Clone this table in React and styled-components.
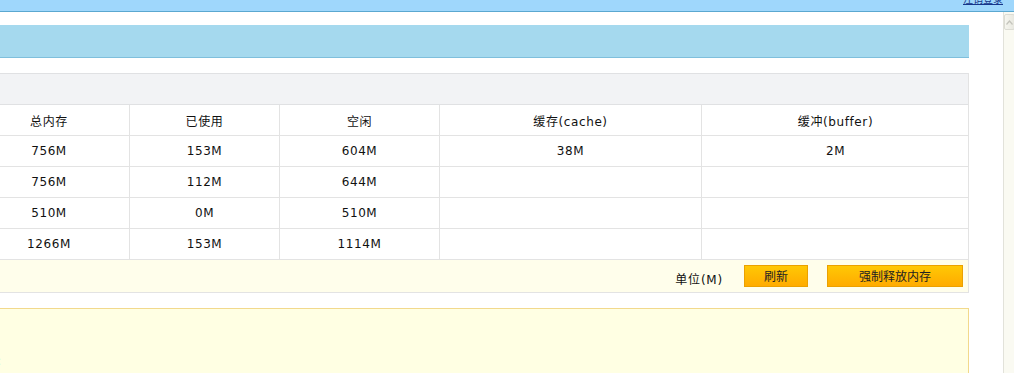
import React from 'react'
import styled, { createGlobalStyle } from 'styled-components'

const GlobalStyle = createGlobalStyle`
  html, body {
    margin: 0;
    padding: 0;
    background: #ffffff;
    overflow: hidden;
  }
  body {
    font-family: "DejaVu Sans", "Noto Sans CJK SC", sans-serif;
    font-size: 12px;
    color: #111;
  }
`

const Page = styled.div`
  width: 1014px;
  height: 373px;
  display: flex;
  flex-direction: column;
  overflow: hidden;
`

const TopBar = styled.div`
  height: 11px;
  flex-shrink: 0;
  background: #9fd7fc;
  border-bottom: 1px solid #5ba8d0;
  display: flex;
  justify-content: flex-end;
  align-items: flex-end;
  padding-right: 11px;
  overflow: hidden;
`

const TopLink = styled.a`
  font-size: 10px;
  line-height: 16px;
  margin-bottom: 3px;
  color: #16358a;
  text-decoration: underline;
`

const Body = styled.div`
  flex: 1;
  display: flex;
  min-height: 0;
`

const Main = styled.div`
  flex: 1;
  overflow: hidden;
  padding-top: 13px;
`

// the frame is scrolled a little to the right, so the content starts left of the viewport
const Content = styled.div`
  width: 1000px;
  margin-left: -31px;
  display: flex;
  flex-direction: column;
`

const TitleBand = styled.div`
  height: 32px;
  background: #a5d9ee;
  border-bottom: 1px solid #7fbfdc;
`

const Panel = styled.div`
  margin-top: 15px;
  border-right: 1px solid #e3e3e3;
`

const PanelHead = styled.div`
  height: 30px;
  background: #f2f3f5;
  border-top: 1px solid #e0e1e3;
  border-bottom: 1px solid #e0e1e3;
`

const Grid = styled.div`
  display: grid;
  grid-template-columns: 160px 150px 160px 262px 268px;
`

const Cell = styled.div`
  height: 30px;
  display: flex;
  align-items: center;
  justify-content: center;
  border-bottom: 1px solid #e3e3e3;
  border-left: ${p => (p.$first ? 'none' : '1px solid #e3e3e3')};
  letter-spacing: 0.6px;
  color: #111;
`

const Footer = styled.div`
  height: 32px;
  background: #fffeeb;
  border-bottom: 1px solid #e3e3e3;
  display: flex;
  align-items: center;
  justify-content: flex-end;
  padding-right: 5px;
  gap: 19px;
`

const Unit = styled.span`
  letter-spacing: 0.8px;
  margin-top: 4px;
  margin-right: 2px;
`

const Button = styled.button`
  width: ${p => p.$w}px;
  height: 22px;
  padding: 0 0 2px;
  border: 1px solid #eba100;
  background: linear-gradient(#ffc805, #ffab00);
  font-family: "DejaVu Sans", "Noto Sans CJK SC", sans-serif;
  font-size: 12px;
  color: #222;
  cursor: pointer;
`

const NoteBox = styled.div`
  margin-top: 15px;
  height: 80px;
  background: #ffffe3;
  border-top: 1px solid #f2d98c;
  border-right: 1px solid #f2d98c;
  padding-top: 44px;
  box-sizing: border-box;
`

const NoteText = styled.div`
  padding-left: 4px;
  line-height: 16px;
`

const ScrollTrack = styled.div`
  width: 10px;
  background: #fafaf2;
  border-left: 1px solid #e2e2da;
  padding-top: 2px;
  display: flex;
  flex-direction: column;
  align-items: center;
`

const ScrollButton = styled.div`
  width: 9px;
  height: 14px;
  border: 1px solid #dcdcd4;
  border-radius: 2px;
  background: linear-gradient(90deg, #f6f6ef, #e8e8e0);
  display: flex;
  align-items: center;
  justify-content: center;
`

const head = ['总内存', '已使用', '空闲', '缓存(cache)', '缓冲(buffer)']
const rows = [
  ['756M', '153M', '604M', '38M', '2M'],
  ['756M', '112M', '644M', '', ''],
  ['510M', '0M', '510M', '', ''],
  ['1266M', '153M', '1114M', '', ''],
]

const App = () => (
  <Page>
    <GlobalStyle />
    <TopBar>
      <TopLink href="#">注销登录</TopLink>
    </TopBar>
    <Body>
      <Main>
        <Content>
          <TitleBand />
          <Panel>
            <PanelHead />
            <Grid>
              {head.map((h, i) => (
                <Cell key={h} $first={i === 0}>{h}</Cell>
              ))}
              {rows.map((r, ri) =>
                r.map((v, ci) => (
                  <Cell key={ri + '-' + ci} $first={ci === 0}>{v}</Cell>
                ))
              )}
            </Grid>
            <Footer>
              <Unit>单位(M)</Unit>
              <Button $w={64}>刷新</Button>
              <Button $w={136}>强制释放内存</Button>
            </Footer>
          </Panel>
          <NoteBox>
            <NoteText>说明:</NoteText>
          </NoteBox>
        </Content>
      </Main>
      <ScrollTrack>
        <ScrollButton>
          <svg width="7" height="5" viewBox="0 0 7 5">
            <path d="M0.5 4.5 L3.5 1 L6.5 4.5" fill="none" stroke="#c4c4bc" strokeWidth="1.2" />
          </svg>
        </ScrollButton>
      </ScrollTrack>
    </Body>
  </Page>
)

export default App
